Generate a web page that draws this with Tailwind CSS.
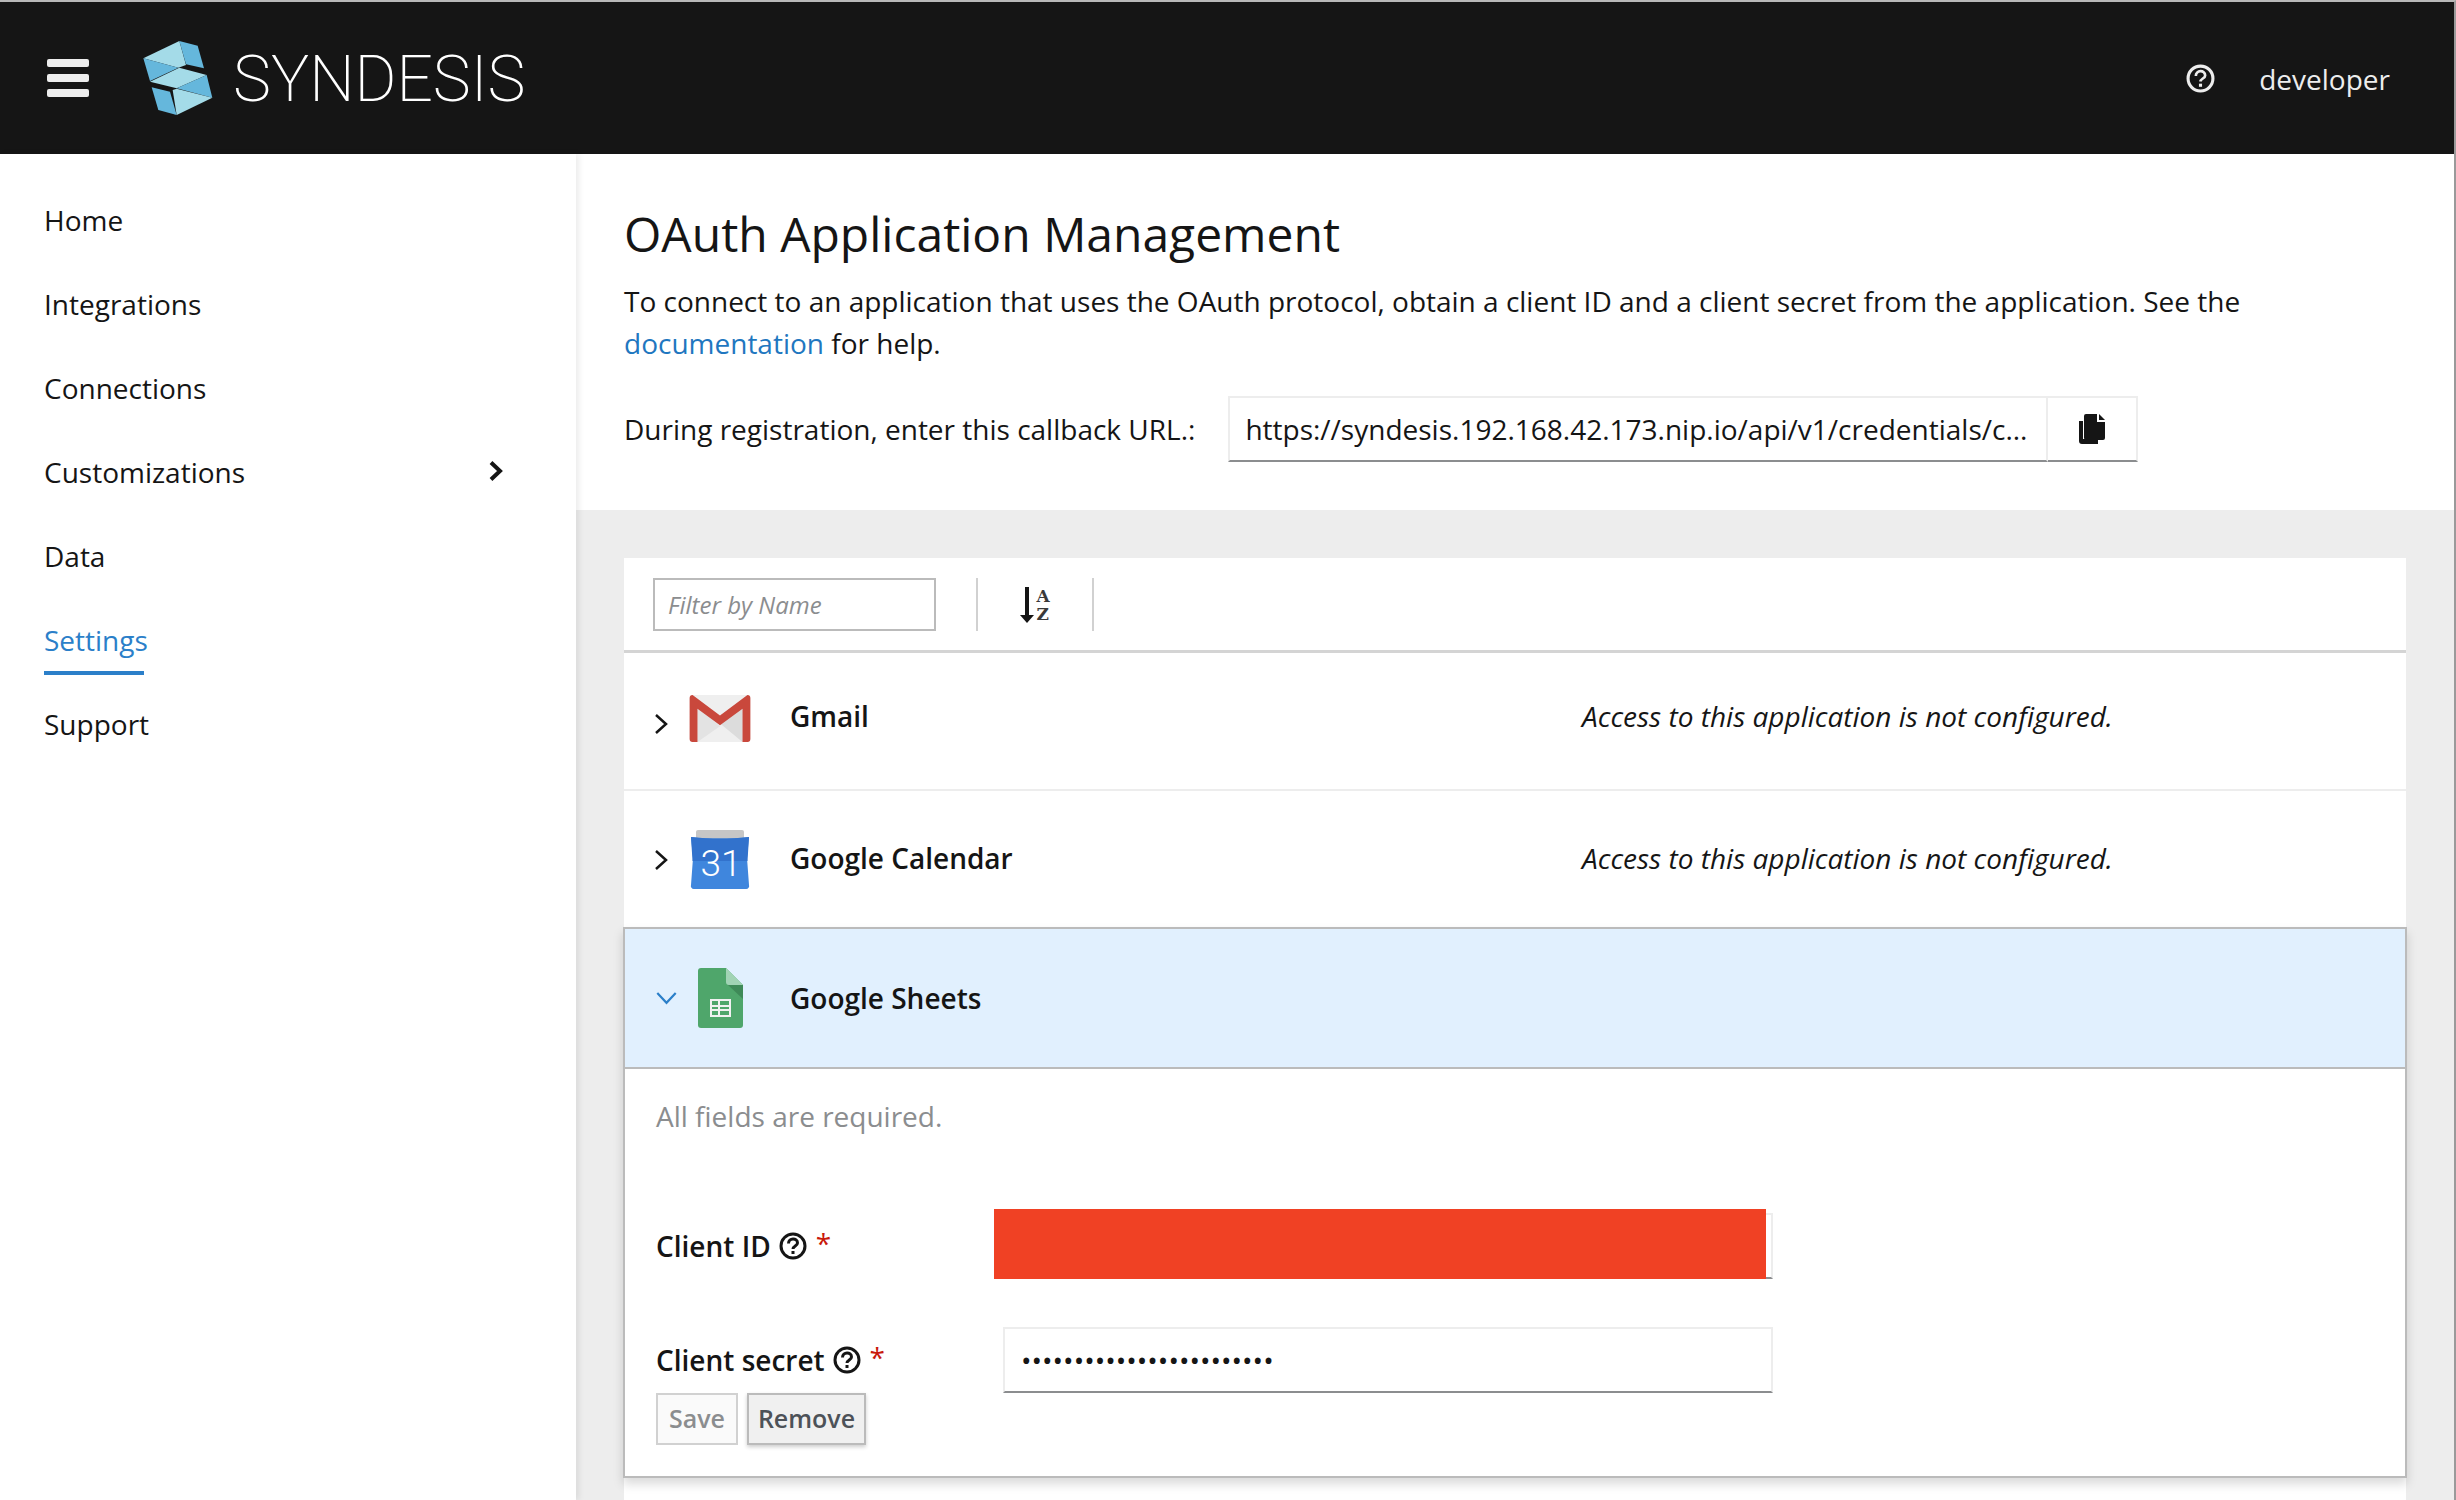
<!DOCTYPE html>
<html lang="en">

<head>
    <meta charset="UTF-8">
    <meta name="viewport" content="width=device-width, initial-scale=1.0">
    <script src="https://cdn.jsdelivr.net/npm/@tailwindcss/browser@4"></script>
    <title>Syndesis</title>
</head>

<body class="h-[1500px] overflow-hidden bg-white font-['Open_Sans',sans-serif] text-[28px] text-[#151515] flex flex-col border-t-2 border-r-2 border-t-[#b8b8b8] border-r-[#9a9a9a]">
    <!-- top bar -->
    <nav class="flex-none h-[152px] bg-[#151515] flex items-center">
        <div class="ml-[47px] w-[42px] flex flex-col gap-[7px]">
            <div class="h-[8px] rounded-[2px] bg-[#ededed]"></div>
            <div class="h-[8px] rounded-[2px] bg-[#ededed]"></div>
            <div class="h-[8px] rounded-[2px] bg-[#ededed]"></div>
        </div>
        <svg class="ml-[53px] w-[72px] h-[76px]" viewBox="36 30 216 228">
            <polygon points="40,85 148,33 168,105 145,113" fill="#a4dbe8"/>
            <polygon points="148,33 203,47 222,115 168,103" fill="#65b7dc"/>
            <polygon points="40,85 145,113 60,153" fill="#65b7dc"/>
            <polygon points="60,155 148,113 230,135 140,175" fill="#a4dbe8"/>
            <polygon points="230,135 247,203 140,175" fill="#65b7dc"/>
            <polygon points="65,172 120,185 140,255 85,240" fill="#65b7dc"/>
            <polygon points="128,180 140,176 247,203 140,255" fill="#a4dbe8"/>
        </svg>
        <span class="ml-[19px] mt-[3px] font-['Roboto',sans-serif] font-extralight text-[64px] leading-none text-white">SYNDESIS</span>
        <div class="ml-auto flex items-center">
            <svg class="w-[29px] h-[29px] mr-[1px]" viewBox="0 0 28 28" fill="none" stroke="#ededed" stroke-width="3">
                <circle cx="14" cy="14" r="12"/>
                <path d="M9.500 11.500c0-6 9-6 9-.5 0 3-4.500 3-4.500 6" stroke-width="2.600"/>
                <rect x="12.500" y="19" width="3" height="3" fill="#ededed" stroke="none"/>
            </svg>
            <span class="ml-[43px] mr-[64px] mt-[2px] text-[#ededed]">developer</span>
        </div>
    </nav>

    <div class="flex-1 flex min-h-0">
        <!-- side menu -->
        <aside class="flex-none w-[576px] bg-white relative z-10 shadow-[3px_0_6px_rgba(0,0,0,0.08)] pt-[24px]">
            <a class="h-[84px] pl-[44px] flex items-center">Home</a>
            <a class="h-[84px] pl-[44px] flex items-center">Integrations</a>
            <a class="h-[84px] pl-[44px] flex items-center">Connections</a>
            <a class="h-[84px] pl-[44px] pr-[72px] flex items-center justify-between">Customizations
                <svg class="w-[16px] h-[22px] mb-[2px]" viewBox="0 0 16 22" fill="none" stroke="#151515" stroke-width="4">
                    <path d="M3 2.500l9 8.500-9 8.500"/>
                </svg>
            </a>
            <a class="h-[84px] pl-[44px] flex items-center">Data</a>
            <a class="h-[84px] pl-[44px] flex items-center"><span class="w-[100px] whitespace-nowrap text-[#2b7fc9] border-b-[4px] border-[#2b7fc9] h-[70px] pt-[16px] leading-[38px]">Settings</span></a>
            <a class="h-[84px] pl-[44px] flex items-center">Support</a>
        </aside>

        <main class="flex-1 min-w-0 flex flex-col">
            <!-- heading -->
            <section class="flex-none h-[356px] bg-white pl-[48px] pr-[48px] pt-[48px]">
                <h1 class="text-[48px] leading-[64px]">OAuth Application Management</h1>
                <p class="mt-[14px] text-[28px] leading-[42px]">To connect to an application that uses the OAuth protocol, obtain a client ID and a client secret from the application. See the <a class="text-[#1f77c0]">documentation</a> for help.</p>
                <div class="mt-[32px] flex items-center">
                    <span>During registration, enter this callback URL.:</span>
                    <div class="ml-[33px] w-[820px] h-[66px] border-2 border-[#ededed] border-b-[#8b8d8f] flex items-center pl-[15px] whitespace-nowrap overflow-hidden">https://syndesis.192.168.42.173.nip.io/api/v1/credentials/c...</div>
                    <div class="w-[90px] h-[66px] border-2 border-l-0 border-[#ededed] border-b-[#8b8d8f] flex items-center justify-center">
                        <svg class="w-[26px] h-[30px]" viewBox="0 0 26 30" fill="#151515">
                            <path d="M0 7h4v18h15v5H3a3 3 0 0 1-3-3z"/>
                            <path d="M7 0h11v8h8v16a2 2 0 0 1-2 2H7a2 2 0 0 1-2-2V2a2 2 0 0 1 2-2z"/>
                            <path d="M20 0l6 6h-6z"/>
                        </svg>
                    </div>
                </div>
            </section>

            <!-- app list -->
            <section class="flex-1 min-h-0 bg-[#ededed] pl-[48px] pr-[48px] pt-[48px]">
                <div class="h-full bg-white">
                    <div class="h-[95px] border-b-[3px] border-[#d4d4d4] flex items-start pt-[20px] pl-[29px]">
                        <div class="w-[283px] h-[53px] border-2 border-[#bbbbbb] flex items-center pl-[13px] text-[24px] italic text-[#8b8d8f]">Filter by Name</div>
                        <div class="ml-[40px] w-[2px] h-[53px] bg-[#d1d1d1]"></div>
                        <div class="w-[114px] h-[53px] flex items-center justify-center gap-[2px]">
                            <svg class="w-[14px] h-[36px]" viewBox="0 0 14 36" fill="#151515">
                                <path d="M5 0h4v28h5l-7 8-7-8h5z"/>
                            </svg>
                            <div class="flex flex-col font-['DejaVu_Serif',serif] font-bold text-[17px] leading-[18px] text-[#3a3a3a]"><span>A</span><span>Z</span></div>
                        </div>
                        <div class="w-[2px] h-[53px] bg-[#d1d1d1]"></div>
                    </div>

                    <!-- Gmail -->
                    <div class="h-[138px] border-b-2 border-[#ededed] flex items-center pl-[30px]">
                        <svg class="w-[15px] h-[22px] mt-[6px]" viewBox="0 0 15 22" fill="none" stroke="#151515" stroke-width="2.500"><path d="M2 2l10 9-10 9"/></svg>
                        <svg class="ml-[20px] w-[62px] h-[47px] mb-[6px]" viewBox="0 0 62 48">
                            <rect width="62" height="48" rx="3" fill="#efefef"/>
                            <polygon points="8,10 54,48 54,10 31,28" fill="#dcdcdc"/>
                            <polygon points="8,12 31,32 8,48" fill="#e3e3e3"/>
                            <path d="M3 0L31 21 59 0a3 3 0 0 1 3 3v42a3 3 0 0 1-3 3h-5V14L31 31 8 14v34H3a3 3 0 0 1-3-3V3a3 3 0 0 1 3-3z" fill="#c9483c"/>
                        </svg>
                        <span class="ml-[39px] mb-[10px] w-[792px] font-semibold">Gmail</span>
                        <span class="mb-[10px] italic">Access to this application is not configured.</span>
                    </div>

                    <!-- Google Calendar -->
                    <div class="h-[137px] flex items-center pl-[30px]">
                        <svg class="w-[15px] h-[22px]" viewBox="0 0 15 22" fill="none" stroke="#151515" stroke-width="2.500"><path d="M2 2l10 9-10 9"/></svg>
                        <div class="ml-[20px] w-[62px] h-[60px] relative flex-none">
                            <svg class="w-full h-full" viewBox="0 0 62 60">
                                <rect x="7" y="0" width="48" height="12" rx="2" fill="#c6c6c6"/>
                                <path d="M2 7C22 9 40 9 60 7L58 28 60 55a3 3 0 0 1-3 4H5a3 3 0 0 1-3-4L4 28z" fill="#3f86dd"/>
                                <path d="M2 7C22 9 40 9 60 7L58.500 31H3.500z" fill="#3272cc"/>
                            </svg>
                            <span class="absolute inset-x-0 top-[14px] pl-[2px] text-center font-['Roboto',sans-serif] text-[37px] leading-[40px] font-light text-white">31</span>
                        </div>
                        <span class="ml-[39px] mb-[3px] w-[792px] font-semibold">Google Calendar</span>
                        <span class="mb-[3px] italic">Access to this application is not configured.</span>
                    </div>

                    <!-- Google Sheets, expanded -->
                    <div class="mx-[-1px] -mt-[1px] border-2 border-[#bbbbbb] bg-white h-[551px] shadow-[0_6px_10px_rgba(0,0,0,0.15)]">
                        <div class="h-[140px] bg-[#e1f0fe] border-b-2 border-[#bbbbbb] flex items-center pl-[31px]">
                            <svg class="w-[21px] h-[13px]" viewBox="0 0 19 12" fill="none" stroke="#2b7fc9" stroke-width="2"><path d="M1 1l8.500 9L18 1"/></svg>
                            <svg class="ml-[21px] w-[45px] h-[60px]" viewBox="0 0 45 60">
                                <path d="M3 0h25l17 17v40a3 3 0 0 1-3 3H3a3 3 0 0 1-3-3V3a3 3 0 0 1 3-3z" fill="#4fa66b"/>
                                <path d="M28 0l17 17H31a3 3 0 0 1-3-3z" fill="#a1d3b4"/>
                                <path d="M30 17h15v14z" fill="#3f8a58"/>
                                <path d="M12 31h21v18H12z M14 33v4h6v-4z M22 33v4h9v-4z M14 39v2h6v-2z M22 39v2h9v-2z M14 43v4h6v-4z M22 43v4h9v-4z" fill="#f1f1f1" fill-rule="evenodd"/>
                            </svg>
                            <span class="ml-[47px] font-semibold">Google Sheets</span>
                        </div>
                        <div class="pl-[31px]">
                            <p class="pt-[28px] leading-[38px] text-[#8b8d8f]">All fields are required.</p>
                            <div class="mt-[78px] h-[66px] flex items-center">
                                <label class="flex items-center w-[347px] font-semibold">Client ID
                                    <svg class="ml-[8px] w-[28px] h-[28px]" viewBox="0 0 28 28" fill="none" stroke="#151515" stroke-width="3"><circle cx="14" cy="14" r="12"/><path d="M9.500 11.500c0-6 9-6 9-.5 0 3-4.500 3-4.500 6"/><rect x="12.500" y="19" width="3" height="3" fill="#151515" stroke="none"/></svg>
                                    <span class="ml-[9px] mb-[6px] text-[#c9190b] font-normal">*</span>
                                </label>
                                <div class="relative w-[770px] h-[66px] border-2 border-[#ededed] border-b-[#8b8d8f]">
                                    <div class="absolute left-[-11px] top-[-6px] w-[772px] h-[70px] bg-[#f04124]"></div>
                                </div>
                            </div>
                            <div class="mt-[48px] h-[66px] flex items-center">
                                <label class="flex items-center w-[347px] font-semibold">Client secret
                                    <svg class="ml-[8px] w-[28px] h-[28px]" viewBox="0 0 28 28" fill="none" stroke="#151515" stroke-width="3"><circle cx="14" cy="14" r="12"/><path d="M9.500 11.500c0-6 9-6 9-.5 0 3-4.500 3-4.500 6"/><rect x="12.500" y="19" width="3" height="3" fill="#151515" stroke="none"/></svg>
                                    <span class="ml-[9px] mb-[6px] text-[#c9190b] font-normal">*</span>
                                </label>
                                <div class="w-[770px] h-[66px] border-2 border-[#ededed] border-b-[#8b8d8f] flex items-center pl-[16px] text-[#151515] text-[28px] whitespace-nowrap">••••••••••••••••••••••••</div>
                            </div>
                            <div class="flex gap-[9px] text-[25px] font-semibold">
                                <button class="w-[82px] h-[52px] border-2 border-[#d1d1d1] bg-[#fafafa] text-[#8b8d8f]">Save</button>
                                <button class="w-[119px] h-[52px] border-2 border-[#bbbbbb] bg-[#f0f0f0] text-[#4d5258] shadow-[0_2px_4px_rgba(0,0,0,0.2)]">Remove</button>
                            </div>
                        </div>
                    </div>
                </div>
            </section>
        </main>
    </div>
</body>

</html>
